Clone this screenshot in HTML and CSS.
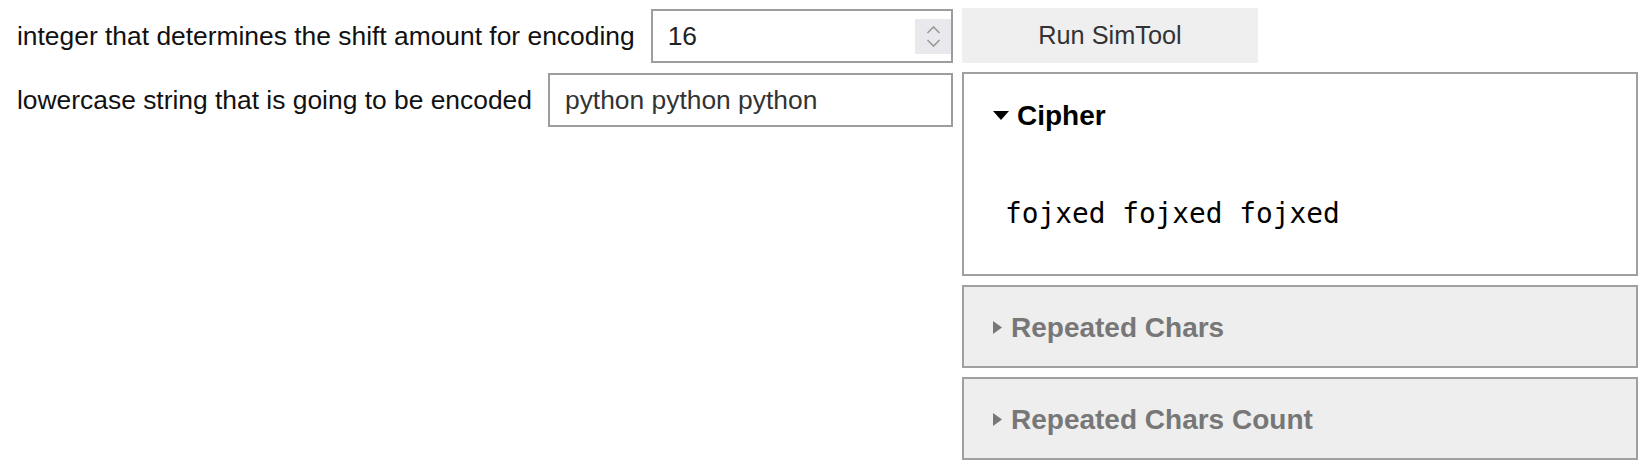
FILE: index.html
```html
<!DOCTYPE html>
<html lang="en">
<head>
<meta charset="utf-8">
<title>SimTool</title>
<link rel="stylesheet" href="styles.css">
</head>
<body>
<div class="app">
  <div class="inputs">
    <div class="row row-first">
      <label class="label" for="shift">integer that determines the shift amount for encoding</label>
      <div class="numbox">
        <input id="shift" class="field" type="text" value="16">
        <div class="spin">
          <svg width="36" height="35" viewBox="0 0 36 35"><path d="M12.5 14 L18.5 8 L24.5 14" fill="none" stroke="#9a9a9a" stroke-width="1.6"/><path d="M12.5 21 L18.5 27 L24.5 21" fill="none" stroke="#9a9a9a" stroke-width="1.6"/></svg>
        </div>
      </div>
    </div>
    <div class="row">
      <label class="label" for="text">lowercase string that is going to be encoded</label>
      <input id="text" class="textbox" type="text" value="python python python">
    </div>
  </div>
  <div class="outputs">
    <button class="run" type="button">Run SimTool</button>
    <details class="panel panel-open" open>
      <summary class="summary summary-open">
        <svg class="tri-down" width="16" height="9" viewBox="0 0 16 9"><path d="M0 0 H16 L8 9 Z" fill="#000"/></svg>
        <span>Cipher</span>
      </summary>
      <div class="result">fojxed fojxed fojxed</div>
    </details>
    <details class="panel panel-closed">
      <summary class="summary summary-closed">
        <svg class="tri-right" width="9" height="13" viewBox="0 0 9 13"><path d="M0 0 L9 6.5 L0 13 Z" fill="#777"/></svg>
        <span>Repeated Chars</span>
      </summary>
    </details>
    <details class="panel panel-closed">
      <summary class="summary summary-closed">
        <svg class="tri-right" width="9" height="13" viewBox="0 0 9 13"><path d="M0 0 L9 6.5 L0 13 Z" fill="#777"/></svg>
        <span>Repeated Chars Count</span>
      </summary>
    </details>
  </div>
</div>
</body>
</html>
```
FILE: styles.css
```css
* { box-sizing: border-box; }
html, body { margin: 0; padding: 0; background: #fff; }
body { font-family: "Liberation Sans", Arial, Helvetica, sans-serif; color: #000; }

.app {
  display: flex;
  gap: 9px;
  padding: 8px 10px 0 17px;
}

.inputs {
  flex: 1;
  min-width: 0;
  display: flex;
  flex-direction: column;
  gap: 10px;
  padding-top: 1px;
}

.row {
  display: flex;
  align-items: center;
  gap: 16px;
  height: 54px;
}

.label {
  flex: none;
  font-size: 26.4px;
  color: #111;
  white-space: nowrap;
}

.numbox {
  flex: 1;
  min-width: 0;
  height: 54px;
  border: 2px solid #9d9d9d;
  display: flex;
  align-items: center;
  background: #fff;
}

.field {
  flex: 1;
  min-width: 0;
  width: 0;
  height: 100%;
  border: 0;
  outline: none;
  padding: 0 0 0 15px;
  font-family: "Liberation Sans", Arial, sans-serif;
  font-size: 26.4px;
  color: #222;
  background: transparent;
}

.spin {
  flex: none;
  width: 36px;
  height: 35px;
  background: #e9e9ed;
  display: flex;
}

.textbox {
  flex: 1;
  min-width: 0;
  width: 0;
  height: 54px;
  border: 2px solid #9d9d9d;
  outline: none;
  padding: 0 0 0 15px;
  font-family: "Liberation Sans", Arial, sans-serif;
  font-size: 26.4px;
  color: #333;
  background: #fff;
}

.outputs {
  flex: none;
  width: 676px;
  display: flex;
  flex-direction: column;
  gap: 9px;
}

.run {
  width: 296px;
  height: 55px;
  border: 0;
  background: #efefef;
  font-family: "Liberation Sans", Arial, sans-serif;
  font-size: 25.3px;
  color: #333;
  padding: 0;
}

.panel {
  border: 2px solid #a0a0a0;
}

.panel-open { background: #fff; height: 204px; }
.panel-closed { background: #eeeeee; height: 83px; }

.summary {
  list-style: none;
  display: flex;
  align-items: center;
  padding-left: 29px;
  font-size: 28px;
  font-weight: bold;
  cursor: pointer;
}
.summary::-webkit-details-marker { display: none; }
.summary::marker { content: ""; }

.summary-open { height: 84px; color: #000; gap: 8px; padding-bottom: 1px; }
.summary-closed { height: 79px; color: #777; gap: 9px; padding-top: 2px; }

.tri-down, .tri-right { flex: none; display: block; }

.result {
  padding: 39px 0 44px 41px;
  font-family: "DejaVu Sans Mono", "Liberation Mono", monospace;
  font-size: 27.8px;
  line-height: 33px;
  color: #000;
  white-space: pre;
}
```
